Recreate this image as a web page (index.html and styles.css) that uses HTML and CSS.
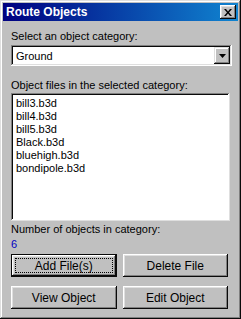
FILE: index.html
```html
<!DOCTYPE html>
<html lang="en">
<head>
    <meta charset="UTF-8">
    <meta name="viewport" content="width=device-width, initial-scale=1.0">
    <title>Route Objects</title>
    <link rel="stylesheet" href="styles.css">
</head>
<body>
    <div class="window">
        <div class="titlebar">
            <span class="title">Route Objects</span>
            <button class="close">
                <svg width="8" height="7" viewBox="0 0 8 7">
                    <path d="M0 0h2l2 2.5L6 0h2L5 3.5 8 7H6L4 4.5 2 7H0l3-3.5z" fill="#000"/>
                </svg>
            </button>
        </div>
        <div class="content">
            <label class="label first">Select an object category:</label>
            <div class="combo">
                <span class="combo-text">Ground</span>
                <span class="combo-btn">
                    <svg width="7" height="4" viewBox="0 0 7 4"><path d="M0 0h7L3.5 4z" fill="#000"/></svg>
                </span>
            </div>
            <label class="label files">Object files in the selected category:</label>
            <ul class="listbox">
                <li>bill3.b3d</li>
                <li>bill4.b3d</li>
                <li>bill5.b3d</li>
                <li>Black.b3d</li>
                <li>bluehigh.b3d</li>
                <li>bondipole.b3d</li>
            </ul>
            <div class="label count-label">Number of objects in category:</div>
            <div class="count">6</div>
            <div class="buttons">
                <button class="btn default">Add File(s)</button>
                <button class="btn">Delete File</button>
                <button class="btn">View Object</button>
                <button class="btn">Edit Object</button>
            </div>
        </div>
    </div>
</body>
</html>
```

FILE: styles.css
```css
body {
    margin: 0;
    font-family: "Liberation Sans", Arial, sans-serif;
    font-size: 11px;
    color: #000;
    background: #c0c0c0;
}
.window {
    box-sizing: border-box;
    width: 241px;
    height: 319px;
    padding: 3px;
    background: #c0c0c0;
    box-shadow: inset -1px -1px #0a0a0a, inset 1px 1px #dfdfdf, inset -2px -2px #808080, inset 2px 2px #fff;
    display: flex;
    flex-direction: column;
}
.titlebar {
    height: 18px;
    background: linear-gradient(90deg, #000080, #1084d0);
    display: flex;
    align-items: center;
    justify-content: space-between;
    padding: 0 2px 0 3px;
}
.title {
    color: #fff;
    font-weight: bold;
    font-size: 12px;
}
.close {
    box-sizing: border-box;
    width: 16px;
    height: 14px;
    padding: 0;
    border: none;
    background: #c0c0c0;
    box-shadow: inset -1px -1px #0a0a0a, inset 1px 1px #fff, inset -2px -2px #808080, inset 2px 2px #dfdfdf;
    display: flex;
    align-items: center;
    justify-content: center;
}
.content {
    padding: 0 8px;
    display: flex;
    flex-direction: column;
}
.label {
    display: block;
    line-height: 13px;
}
.first {
    margin-top: 9px;
}
.combo {
    box-sizing: border-box;
    margin-top: 2px;
    width: 221px;
    height: 21px;
    padding: 2px;
    background: #fff;
    box-shadow: inset -1px -1px #fff, inset 1px 1px #808080, inset -2px -2px #dfdfdf, inset 2px 2px #0a0a0a;
    display: flex;
    align-items: center;
}
.combo-text {
    flex: 1;
    padding-left: 3px;
}
.combo-btn {
    box-sizing: border-box;
    width: 16px;
    height: 17px;
    background: #c0c0c0;
    box-shadow: inset -1px -1px #0a0a0a, inset 1px 1px #dfdfdf, inset -2px -2px #808080, inset 2px 2px #fff;
    display: flex;
    align-items: center;
    justify-content: center;
}
.files {
    margin-top: 13px;
}
.listbox {
    box-sizing: border-box;
    list-style: none;
    margin: 1px 0 0;
    width: 219px;
    height: 128px;
    padding: 4px 3px;
    background: #fff;
    box-shadow: inset -1px -1px #dfdfdf, inset 1px 1px #808080, inset -2px -2px #fff, inset 2px 2px #0a0a0a;
}
.listbox li {
    line-height: 13px;
    padding-left: 2px;
}
.count-label {
    margin-top: 2px;
}
.count {
    margin-top: 2px;
    line-height: 13px;
    color: #0000c0;
}
.buttons {
    margin-top: 3px;
    width: 217px;
    display: grid;
    grid-template-columns: 1fr 1fr;
    column-gap: 6px;
    row-gap: 9px;
}
.btn {
    box-sizing: border-box;
    height: 23px;
    padding: 0;
    border: none;
    background: #c0c0c0;
    font-family: inherit;
    font-size: 12px;
    color: #000;
    box-shadow: inset -1px -1px #0a0a0a, inset 1px 1px #fff, inset -2px -2px #808080, inset 2px 2px #dfdfdf;
}
.btn.default {
    box-shadow: inset -1px -1px #0a0a0a, inset 1px 1px #0a0a0a, inset -2px -2px #0a0a0a, inset 2px 2px #fff, inset -3px -3px #808080, inset 3px 3px #dfdfdf;
    outline: 1px dotted #000;
    outline-offset: -5px;
}
```
